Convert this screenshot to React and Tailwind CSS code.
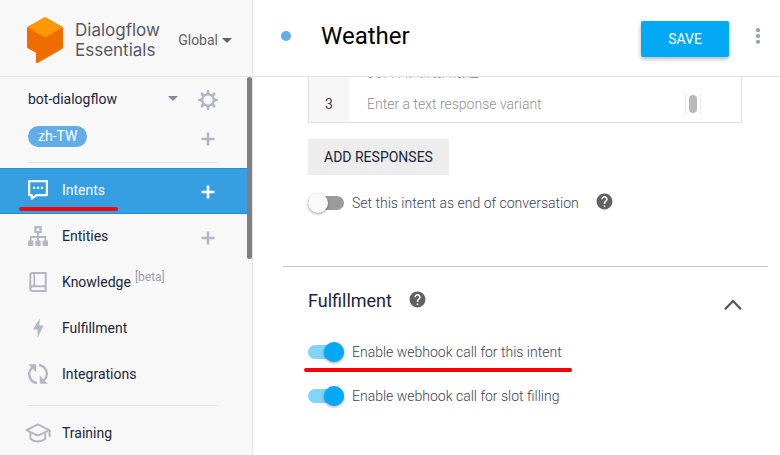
import { useState } from 'react';
import { MdHelp } from 'react-icons/md';

const Logo = () => (
  <svg viewBox="0 0 36 46" className="h-[46px] w-9 shrink-0" aria-hidden="true">
    <path d="M18 0.5 L35 9.6 Q36 10.3 36 11.5 V30 Q36 31.3 35 32 L10.6 46 Q9 46.6 9 45 V35.8 L1 31.5 Q0 31 0 29.8 V11.5 Q0 10.3 1 9.6 Z" fill="#ef6c00" />
    <path d="M16.8 0.5 Q18 -0.2 19.2 0.5 L35.4 10.4 L18 20.4 L0.6 10.4 Z" fill="#ff9800" />
  </svg>
);

const Caret = ({ className = '' }) => (
  <svg viewBox="0 0 10 5" className={className} fill="currentColor" aria-hidden="true">
    <path d="M0 0h10L5 5z" />
  </svg>
);

const Plus = () => (
  <svg viewBox="0 0 14 14" className="size-3.5" fill="none" stroke="currentColor" strokeWidth="2.6" aria-hidden="true">
    <path d="M7 0.5v13M0.5 7h13" />
  </svg>
);

const Gear = () => (
  <svg viewBox="0 0 20 20" className="size-5" fill="none" stroke="currentColor" strokeWidth="2.2" aria-hidden="true">
    <circle cx="10" cy="10" r="5.7" />
    {[0, 45, 90, 135, 180, 225, 270, 315].map(a => (
      <path key={a} d="M8 4.6 L9 0.1h2L12 4.6z" fill="currentColor" stroke="none" transform={`rotate(${a} 10 10)`} />
    ))}
  </svg>
);

const IntentsIcon = () => (
  <svg viewBox="0 0 20 20" className="size-5" aria-hidden="true">
    <path d="M1.1 1.1h17.8v14H8.6L3.8 18.6V15.1H1.1z" fill="none" stroke="currentColor" strokeWidth="2.2" strokeLinejoin="round" />
    <path d="M5 6.8h2.2V9H5zM8.9 6.8h2.2V9H8.9zM12.8 6.8H15V9h-2.2z" fill="currentColor" />
  </svg>
);

const EntitiesIcon = () => (
  <svg viewBox="0 0 20 20" className="size-5" fill="none" stroke="currentColor" aria-hidden="true">
    <rect x="7.4" y="1.2" width="5.2" height="4.8" strokeWidth="2.2" />
    <path d="M10 6v9M2.7 15v-4h14.6v4" strokeWidth="1.8" />
    <g fill="currentColor" stroke="none">
      <rect x="0" y="14.6" width="5.4" height="5.4" rx="1" />
      <rect x="7.3" y="14.6" width="5.4" height="5.4" rx="1" />
      <rect x="14.6" y="14.6" width="5.4" height="5.4" rx="1" />
    </g>
  </svg>
);

const KnowledgeIcon = () => (
  <svg viewBox="0 0 20 20" className="size-5" fill="none" stroke="currentColor" strokeWidth="2" aria-hidden="true">
    <path d="M17.7 1.1H4.4Q2.3 1.1 2.3 3.2V16.4Q2.3 18.9 4.8 18.9H17.7z" />
    <path d="M17.7 14.2H4.8Q2.5 14.4 2.4 16.4" />
    <path d="M6.3 1v13" strokeWidth="1.7" />
  </svg>
);

const FulfillmentIcon = () => (
  <svg viewBox="0 0 20 20" className="size-5" fill="currentColor" aria-hidden="true">
    <path d="M11.8 0.2 L5 11.4h4.5L9.6 19.8 L15.6 7.6h-4.4z" />
  </svg>
);

const IntegrationsIcon = () => (
  <svg viewBox="0 0 20 20" className="size-5" aria-hidden="true">
    <g fill="none" stroke="currentColor" strokeWidth="2.3">
      <path d="M4.6 3.4C1.2 6 0.2 10.6 2.2 14.4C3.6 17 6 18.7 9 19" />
      <path d="M15.4 16.6C18.8 14 19.8 9.4 17.8 5.6C16.4 3 14 1.3 11 1" />
    </g>
    <path d="M0.2 0.2h8v8L5.7 5.7 3.6 3.4zM19.8 19.8h-8v-8l2.5 2.5 2.1 2.3z" fill="currentColor" />
  </svg>
);

const TrainingIcon = () => (
  <svg viewBox="0 0 26 20" className="h-5 w-[26px] shrink-0" fill="none" stroke="currentColor" strokeWidth="2" strokeLinejoin="round" aria-hidden="true">
    <path d="M1.5 7.2 L12.8 1.4 24.4 7.2 12.8 12.6z" />
    <path d="M5.4 9.4v6.4Q8.6 18.6 12.8 18.6T20.2 15.8V9.4M24.6 7.2v6.6" />
  </svg>
);

const NAV = [
  { label: 'Intents', icon: IntentsIcon, add: true },
  { label: 'Entities', icon: EntitiesIcon, add: true },
  { label: 'Knowledge', icon: KnowledgeIcon, tag: '[beta]' },
  { label: 'Fulfillment', icon: FulfillmentIcon },
  { label: 'Integrations', icon: IntegrationsIcon },
];

function NavItem({ label, icon: Icon, add, tag, active }) {
  return (
    <li className={`relative flex h-[46px] items-center pr-[34px] pl-7 ${active ? 'border-y border-[#1e8fe1] bg-[#369fe2] text-white' : 'text-[#b3b7c3]'}`}>
      <a href="#" className="flex flex-1 items-center gap-3.5 pb-0.5">
        <span className="flex w-5 justify-center"><Icon /></span>
        <span className={`text-sm leading-5 ${active ? 'text-white' : 'text-[#20243a]'}`}>
          {label}
          {tag && <sup className="ml-1 text-xs text-[#9a9fb4]">{tag}</sup>}
        </span>
      </a>
      {add && (
        <button type="button" aria-label={`Add ${label}`} className="flex w-5 justify-center pt-0.5"><Plus /></button>
      )}
      {active && <span className="absolute bottom-0.5 left-[19px] h-1 w-[99px] rounded-full bg-[#fb0007]" />}
    </li>
  );
}

function Toggle({ id, label, checked, onChange, underline, children }) {
  return (
    <div className="flex h-6 items-center">
      <div className="relative flex items-center gap-2">
        <input
          id={id} type="checkbox" role="switch" checked={checked} onChange={e => onChange(e.target.checked)}
          className="relative h-3.5 w-9 appearance-none rounded-full bg-[#9b9b9b] before:absolute before:-top-[3px] before:left-0 before:size-5 before:rounded-full before:bg-[#fafafa] before:shadow-[0_1px_3px_rgba(0,0,0,0.4)] checked:bg-[#81d4fa] checked:before:left-4 checked:before:bg-[#03a9f4]"
        />
        <label htmlFor={id} className="text-sm leading-5 font-light text-[#3c4257]">{label}</label>
        {underline && <span className="absolute top-[26px] -right-2.5 -left-1 h-1 rounded-full bg-[#fb0007]" />}
      </div>
      {children}
    </div>
  );
}

const HelpButton = ({ label }) => (
  <button type="button" aria-label={label} className="-mt-1 ml-4 text-[#616161]"><MdHelp size={19} /></button>
);

export default function App() {
  const [endOfConversation, setEndOfConversation] = useState(false);
  const [webhook, setWebhook] = useState(true);
  const [slotFilling, setSlotFilling] = useState(true);
  const [response, setResponse] = useState('我看看天氣預報喔');
  const [draft, setDraft] = useState('');

  return (
    <div className="flex h-screen overflow-hidden bg-white font-[Roboto,'Noto_Sans_CJK_TC',sans-serif] text-[#20243a]">
      {/* Sidebar */}
      <aside className="flex w-[253px] shrink-0 flex-col border-r border-[#e4e4e4] bg-[#f8f8f8]">
        <div className="flex h-[77px] shrink-0 items-center border-b border-[#e4e4e4] pt-1 pl-[27px]">
          <Logo />
          <div className="ml-3 font-[Inter,sans-serif] text-[17px] leading-5 text-[#545866]">Dialogflow<br />Essentials</div>
          <button type="button" className="mr-5 ml-auto flex items-center gap-1 text-sm text-[#616161]">
            Global <Caret className="h-[5px] w-2.5" />
          </button>
        </div>

        <div className="relative min-h-0 flex-1">
          <div className="flex h-[45px] items-center pr-[34px] pl-7">
            <button type="button" className="flex flex-1 items-center justify-between pb-0.5 text-sm leading-5">
              bot-dialogflow <Caret className="h-[5px] w-2.5 text-[#8288a0]" />
            </button>
            <button type="button" aria-label="Settings" className="ml-5 text-[#b3b7c3]"><Gear /></button>
          </div>
          <div className="flex h-10 items-start justify-between pr-[34px] pl-7">
            <span className="mt-1 rounded-full bg-[#62ade8] px-2.5 text-sm leading-[21px] text-white">zh-TW</span>
            <button type="button" aria-label="Add language" className="mt-2.5 flex w-5 justify-center text-[#b3b7c3]"><Plus /></button>
          </div>
          <hr className="mr-[34px] mb-[5px] ml-7 border-[#e4e4e4]" />
          <nav>
            <ul>
              {NAV.map(item => <NavItem key={item.label} {...item} active={item.label === 'Intents'} />)}
            </ul>
            <hr className="mt-[7px] mr-[34px] mb-[5px] ml-7 border-[#e4e4e4]" />
            <ul>
              <NavItem label="Training" icon={TrainingIcon} />
            </ul>
          </nav>
          <div className="absolute top-0 right-0 h-[182px] w-[5px] rounded-full bg-[#7f7f7f]" />
        </div>
      </aside>

      {/* Intent editor */}
      <main className="flex min-w-0 flex-1 flex-col">
        <header className="flex h-[77px] shrink-0 items-center border-b border-[#e4e4e4] pr-[18px] pl-7">
          <span className="mb-1 size-2.5 rounded-full bg-[#62ade8]" />
          <h1 className="ml-[30px] flex-1 pb-1 text-2xl leading-8 text-black">Weather</h1>
          <button type="button" className="mt-0.5 h-9 w-[88px] rounded-xs bg-[#03a9f4] text-sm text-white shadow-[0_2px_4px_rgba(0,0,0,0.3)]">SAVE</button>
          <button type="button" aria-label="More" className="mb-1 ml-[25px] text-[#9a9fa8]">
            <svg viewBox="0 0 8 16" className="h-4 w-2" fill="currentColor" aria-hidden="true">
              <circle cx="4" cy="2.2" r="2.1" /><circle cx="4" cy="8" r="2.1" /><circle cx="4" cy="13.8" r="2.1" />
            </svg>
          </button>
        </header>

        <div className="min-h-0 flex-1 overflow-hidden pl-[30px]">
          <section className="pr-[38px] pl-[25px]">
            {/* Response list, scrolled partly under the header */}
            <div className="-mt-[22px] border border-[#e0e0e0]">
              <div className="flex h-[30px]">
                <span className="w-10 bg-[#f7f7f7]" />
                <input
                  aria-label="Text response 2" value={response} onChange={e => setResponse(e.target.value)}
                  className="min-w-0 flex-1 px-[18px] text-sm font-light text-[#3c4257] outline-none"
                />
              </div>
              <div className="flex h-9">
                <span className="flex w-10 items-center justify-center bg-[#f7f7f7] text-sm text-[#3c4257]">3</span>
                <input
                  aria-label="Text response 3" value={draft} onChange={e => setDraft(e.target.value)}
                  placeholder="Enter a text response variant"
                  className="min-w-0 flex-1 px-[18px] text-sm font-light text-[#3c4257] outline-none placeholder:text-[#8f8f8f]"
                />
                <span className="mr-10 flex h-5 w-4 justify-center self-center border-x border-[#e8e8e8]">
                  <span className="h-[18px] w-2 self-center rounded-full bg-[#b9b9b9]" />
                </span>
              </div>
            </div>
            <button type="button" className="mt-4 h-9 bg-[#ededed] px-4 text-sm text-[#20243a]">ADD RESPONSES</button>
            <div className="mt-4">
              <Toggle id="end" label="Set this intent as end of conversation" checked={endOfConversation} onChange={setEndOfConversation}>
                <HelpButton label="About end of conversation" />
              </Toggle>
            </div>
          </section>

          <hr className="mt-[51px] mr-3 border-[#c4c8c8]" />

          <section className="pt-5 pr-[38px] pl-[25px]">
            <div className="flex items-center">
              <h2 className="text-lg leading-7">Fulfillment</h2>
              <HelpButton label="About fulfillment" />
              <button type="button" aria-label="Collapse" className="mt-2 ml-auto text-[#555]">
                <svg viewBox="0 0 18 12" className="h-3 w-[18px]" fill="none" stroke="currentColor" strokeWidth="2.2" aria-hidden="true">
                  <path d="M1 10.2 9 2l8 8.2" />
                </svg>
              </button>
            </div>
            <div className="mt-[25px] flex flex-col gap-5">
              <Toggle id="webhook" label="Enable webhook call for this intent" checked={webhook} onChange={setWebhook} underline />
              <Toggle id="slots" label="Enable webhook call for slot filling" checked={slotFilling} onChange={setSlotFilling} />
            </div>
          </section>
        </div>
      </main>
    </div>
  );
}
